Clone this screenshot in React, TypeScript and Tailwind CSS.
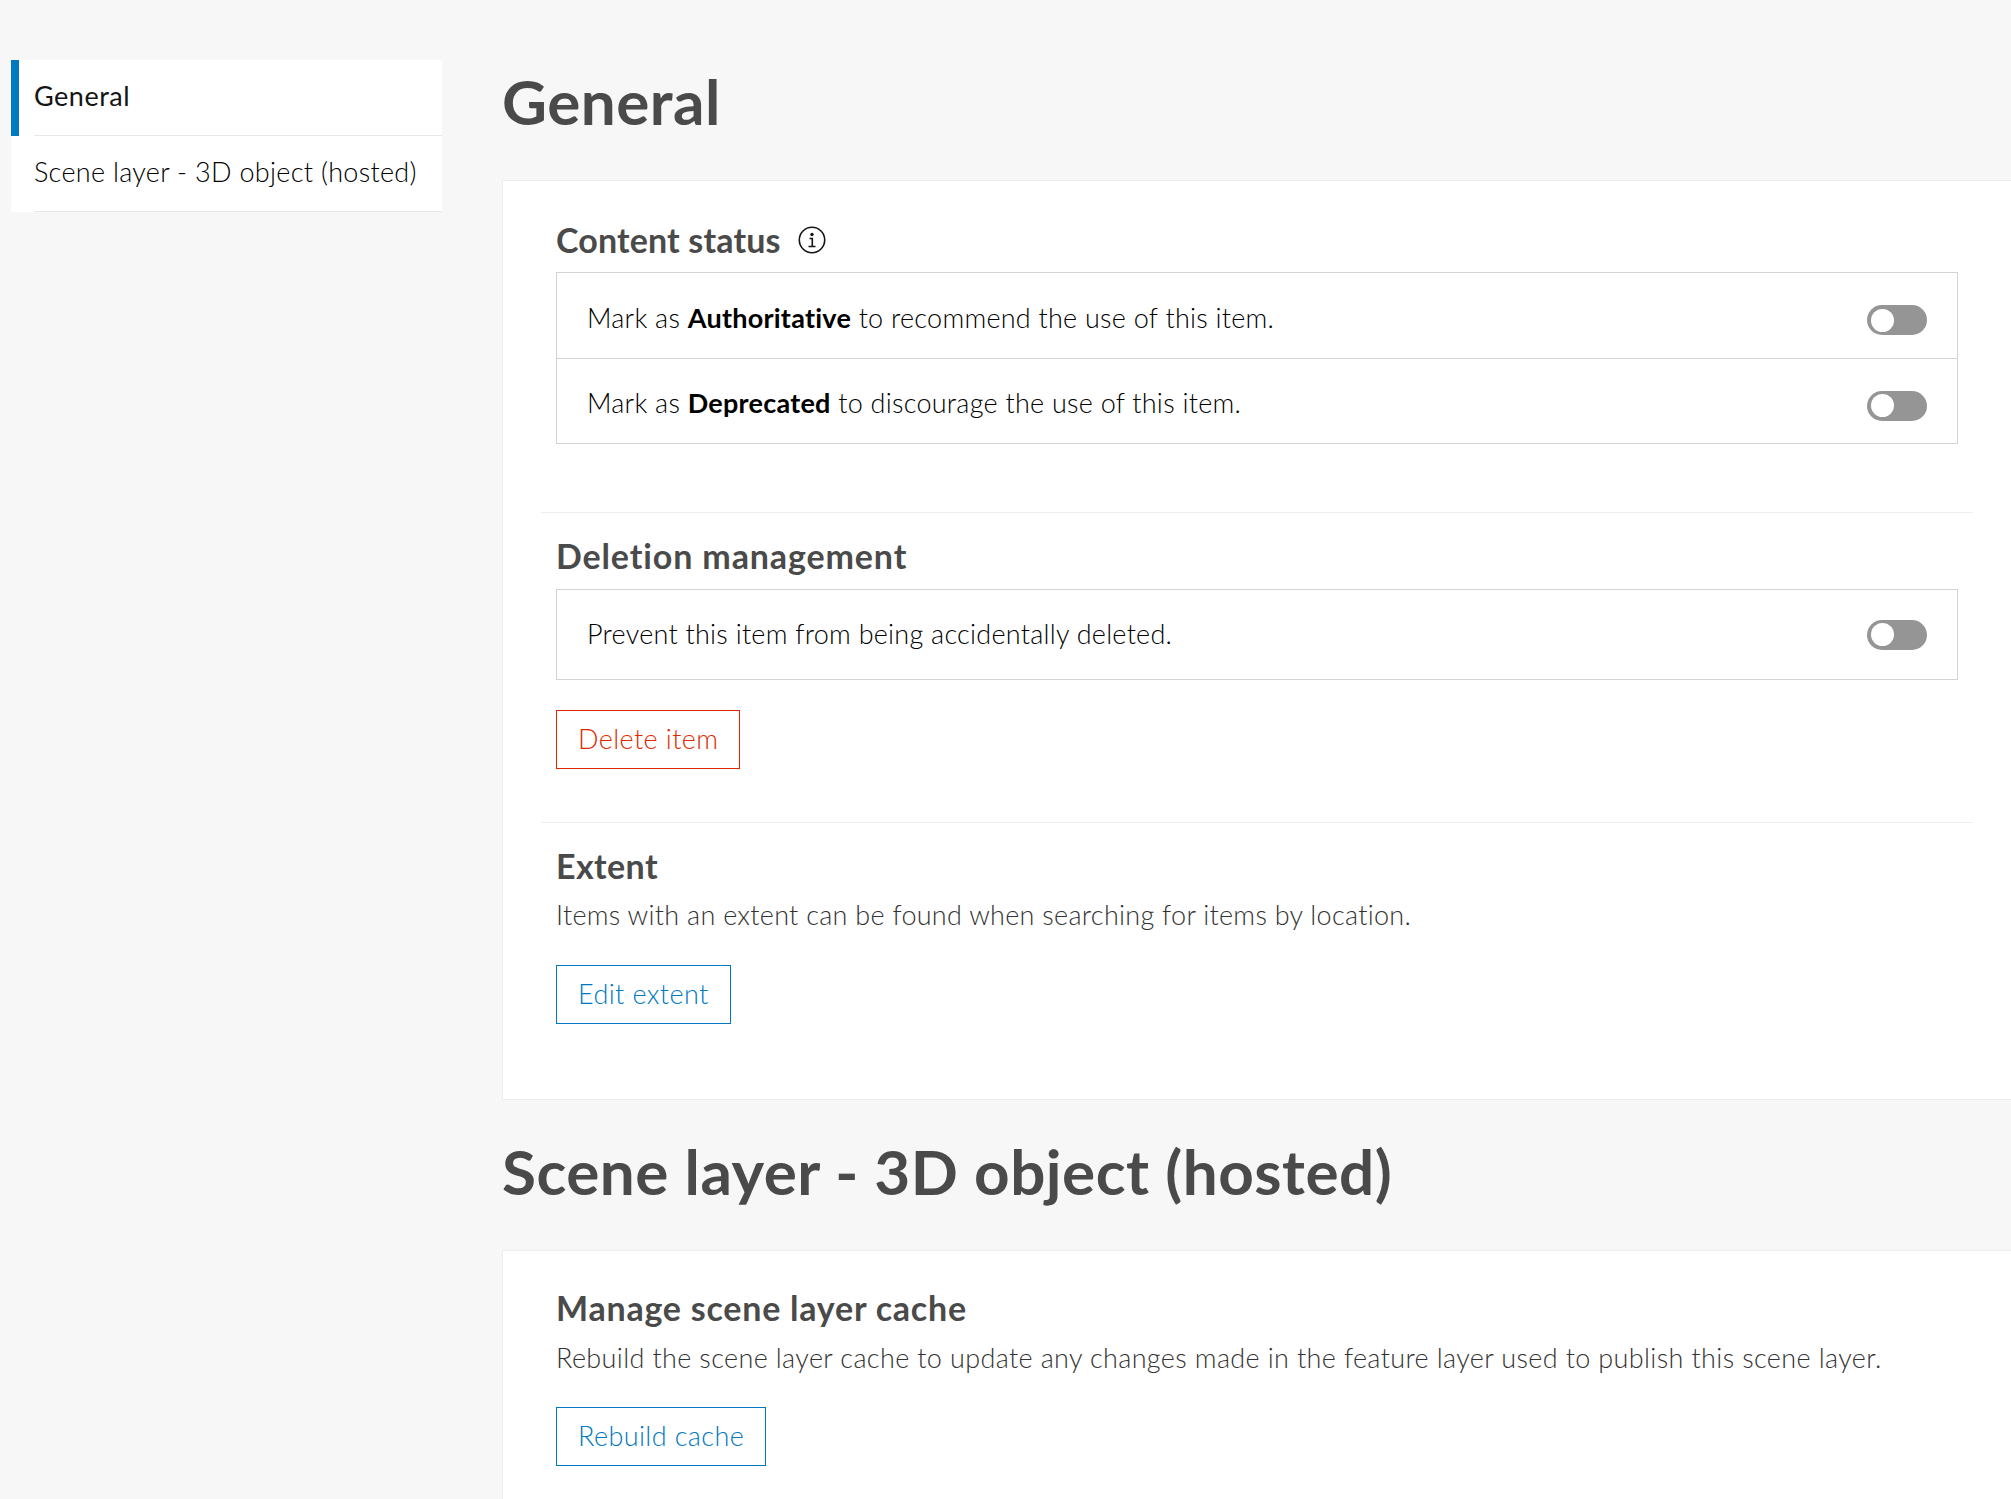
const font = { fontFamily: '"Lato", "Liberation Sans", sans-serif' };

const Toggle = ({ className = "" }: { className?: string }) => {
  return (
    <div className={`flex items-center shrink-0 w-[60px] h-[30px] rounded-full bg-[#959595] pl-[4px] ${className}`}>
      <div className="w-[23px] h-[23px] rounded-full bg-white" />
    </div>
  );
};

const InfoIcon = () => {
  return (
    <svg width="28" height="28" viewBox="0 0 28 28" fill="none" className="text-[#151515]">
      <circle cx="14" cy="14" r="12.7" stroke="currentColor" strokeWidth="1.6" />
      <circle cx="14" cy="8.5" r="1.7" fill="currentColor" />
      <path d="M11.5 12.5h2.8v8M10.5 20.5h7" stroke="currentColor" strokeWidth="1.6" />
    </svg>
  );
};

const Row = ({
  before,
  bold,
  after,
  height,
  textOffset = "",
  toggleOffset = "",
}: {
  before: string;
  bold: string;
  after: string;
  height: string;
  textOffset?: string;
  toggleOffset?: string;
}) => {
  return (
    <div className={`flex items-center justify-between pl-[30px] pr-[30px] ${height}`}>
      <div className={`text-[27px] font-light text-black tracking-[0.25px] ${textOffset}`}>
        {before}
        <span className="font-bold">{bold}</span>
        {after}
      </div>
      <Toggle className={toggleOffset} />
    </div>
  );
};

const Title = ({ children }: { children: React.ReactNode }) => {
  return <h1 className="text-[62px] leading-[70px] font-bold text-[#4a4a4a] tracking-[0.5px]">{children}</h1>;
};

const Subtitle = ({ children, tracking }: { children: React.ReactNode; tracking: string }) => {
  return <h2 className={`text-[34px] leading-[40px] font-bold text-[#4a4a4a] ${tracking}`}>{children}</h2>;
};

const OutlineButton = ({ label, className }: { label: string; className: string }) => {
  return (
    <button className={`block h-[59px] px-[21px] border-[1.5px] text-[27px] font-light tracking-[0.4px] ${className}`}>
      {label}
    </button>
  );
};

export default function App() {
  return (
    <div style={font} className="flex items-start w-[2011px] h-[1499px] overflow-hidden bg-[#f7f7f7]">
      <aside className="w-[431px] ml-[11px] mt-[60px] shrink-0 bg-white">
        <div className="flex h-[76px]">
          <div className="w-[8px] bg-[#0079c1]" />
          <div className="flex-1 ml-[15px] pb-[2px] flex items-center border-b border-[#e8e8e8] text-[27px] text-[#151515] tracking-[0.5px]">
            General
          </div>
        </div>
        <div className="ml-[23px] h-[76px] pb-[2px] flex items-center border-b border-[#e8e8e8] text-[27px] font-light text-black tracking-[0.3px]">
          Scene layer - 3D object (hosted)
        </div>
      </aside>

      <main className="flex-1 ml-[60px] mt-[66px]">
        <Title>General</Title>
        <section className="mt-[44px] h-[920px] bg-white border border-r-0 border-[#eeeeee] pt-[39px] pl-[53px] pr-[38px]">
          <div className="flex items-center gap-[17px]">
            <Subtitle tracking="tracking-[0.15px]">Content status</Subtitle>
            <InfoIcon />
          </div>
          <div className="mt-[12px] mr-[15px] border-[1.5px] border-[#d3d3d3]">
            <Row
              before="Mark as "
              bold="Authoritative"
              after=" to recommend the use of this item."
              height="h-[86px] border-b-[1.5px] border-[#d3d3d3]"
              textOffset="mt-[5px]"
              toggleOffset="mt-[9px]"
            />
            <Row
              before="Mark as "
              bold="Deprecated"
              after=" to discourage the use of this item."
              height="h-[84px]"
              textOffset="mt-[5px]"
              toggleOffset="mt-[9px]"
            />
          </div>

          <div className="mt-[68px] -ml-[15px] border-t border-[#eeeeee] pl-[15px] pt-[23px]">
            <Subtitle tracking="tracking-[0.87px]">Deletion management</Subtitle>
            <div className="mt-[13px] mr-[15px] border-[1.5px] border-[#d3d3d3]">
              <Row before="Prevent this item from being accidentally deleted." bold="" after="" height="h-[89px]" />
            </div>
            <OutlineButton label="Delete item" className="mt-[30px] border-[#de2900] text-[#de2900]" />
          </div>

          <div className="mt-[53px] -ml-[15px] border-t border-[#eeeeee] pl-[15px] pt-[23px]">
            <Subtitle tracking="tracking-[0.4px]">Extent</Subtitle>
            <p className="mt-[10px] text-[27px] leading-[38px] font-light text-[#333333] tracking-[0.28px]">
              Items with an extent can be found when searching for items by location.
            </p>
            <OutlineButton label="Edit extent" className="mt-[31px] border-[#0079c1] text-[#0079c1]" />
          </div>
        </section>

        <div className="mt-[36px]">
          <Title>Scene layer - 3D object (hosted)</Title>
        </div>
        <section className="mt-[44px] h-[300px] bg-white border border-r-0 border-[#eeeeee] pt-[37px] pl-[53px]">
          <Subtitle tracking="tracking-[0.76px]">Manage scene layer cache</Subtitle>
          <p className="mt-[11px] text-[27px] leading-[38px] font-light text-[#333333] tracking-[0.36px]">
            Rebuild the scene layer cache to update any changes made in the feature layer used to publish this scene layer.
          </p>
          <OutlineButton label="Rebuild cache" className="mt-[30px] border-[#0079c1] text-[#0079c1]" />
        </section>
      </main>
    </div>
  );
}
